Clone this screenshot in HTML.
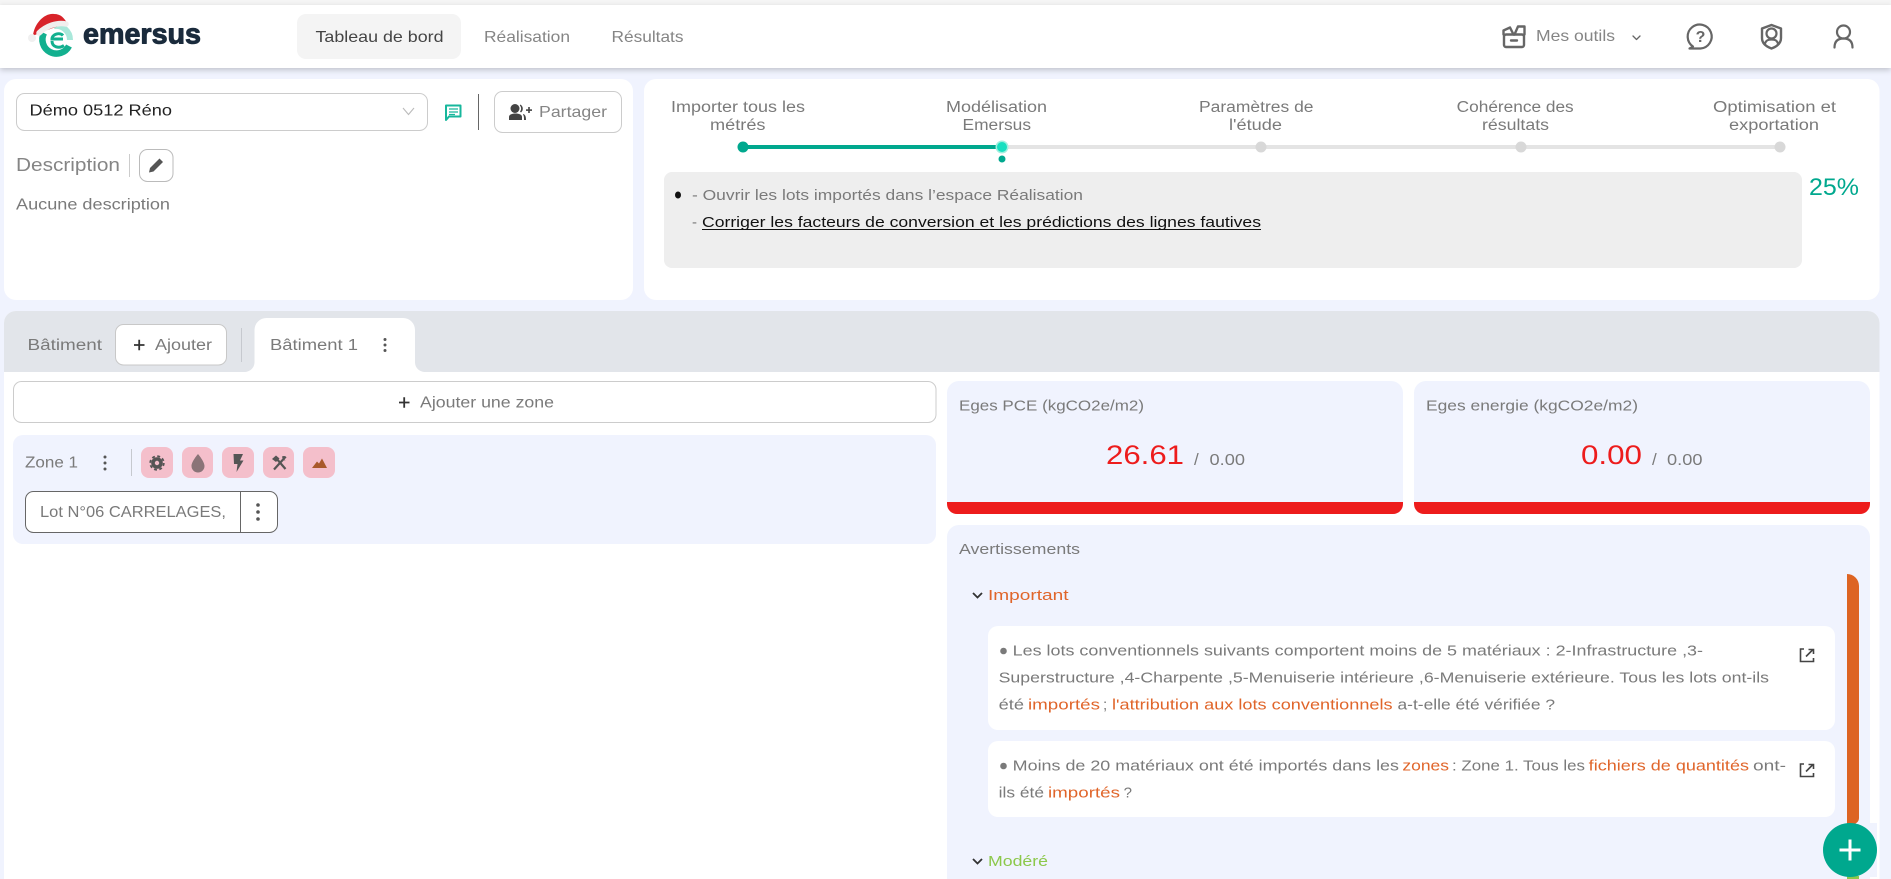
<!DOCTYPE html>
<html lang="fr">
<head>
<meta charset="utf-8">
<title>Emersus</title>
<style>
html,body{margin:0;padding:0;width:1891px;height:879px;overflow:hidden;background:#f0f3fe}
svg{display:block}
text{font-family:"Liberation Sans",Arial,sans-serif;font-size:15px;fill:#7a7a7a;white-space:pre}
</style>
</head>
<body>
<svg width="1891" height="879" viewBox="0 0 1891 879" xmlns="http://www.w3.org/2000/svg">
<rect width="1891" height="879" fill="#f0f3fe"/>
<!-- header -->
<rect y="0" width="1891" height="5" fill="#f5f5f5"/>
<rect y="5" width="1891" height="63" fill="#fff" style="filter:drop-shadow(0 2px 3px rgba(0,0,0,.2))"/>
<!-- logo -->
<path d="M44 33A14 14 0 1 0 69 46" fill="none" stroke="#12b08f" stroke-width="6.5"/>
<path d="M54 26A14 14 0 0 1 70 40" fill="none" stroke="#a9e8da" stroke-width="6"/>
<path d="M63 39H52C52 34 60 32 63 35.500M52 41C52 47 59 49 64 45.500" fill="none" stroke="#12b08f" stroke-width="3"/>
<path d="M33 36C34 24 44 13 54 14C61 14 64 18 67 23L39 33Z" fill="#d8232a"/>
<path d="M39 33C46 26 57 22 66 24" fill="none" stroke="#f1efee" stroke-width="5.500" stroke-linecap="round"/>
<circle cx="32" cy="38" r="4" fill="#f0f0f0"/>
<text x="83" y="43.500" textLength="118" lengthAdjust="spacingAndGlyphs" style="font-size:29px;font-weight:700;fill:#1a2b3c;stroke:#1a2b3c;stroke-width:1;stroke-linejoin:round">emersus</text>
<!-- nav -->
<rect x="297" y="14" width="164" height="45" rx="9" fill="#f4f4f4"/>
<text x="315.500" y="42" textLength="128" lengthAdjust="spacingAndGlyphs" style="font-size:16px;fill:#444">Tableau de bord</text>
<text x="484" y="42" textLength="86" lengthAdjust="spacingAndGlyphs" style="font-size:16px;fill:#858585">Réalisation</text>
<text x="611.500" y="42" textLength="72" lengthAdjust="spacingAndGlyphs" style="font-size:16px;fill:#858585">Résultats</text>
<!-- right tools -->
<g fill="none" stroke="#666" stroke-width="2.400" stroke-linejoin="round" stroke-linecap="round">
<rect x="1504" y="34.500" width="20" height="12.500" rx="2"/>
<path d="M1503.500 34.500V30.500L1510 27.500L1513.500 34.500M1514.500 34.500L1518 26.500H1524.500V34.500M1511 40.500H1517"/>
<path d="M1633 36L1636.500 39.500L1640 36" stroke-width="1.300"/>
<path d="M1693 46.500A12 12 0 1 1 1700.500 48.500C1698 48.500 1695 48.500 1689.500 48.500C1691.500 47.500 1692.500 47 1693 46.500Z" stroke-width="2.200"/>
<path d="M1771.500 25L1781 28.500V38C1781 43 1777 46.500 1771.500 48.500C1766 46.500 1762 43 1762 38V28.500Z"/>
<circle cx="1771.500" cy="33.500" r="5" stroke-width="2.200"/>
<path d="M1765 43.500C1766 40 1768.500 39.500 1771.500 39.500C1774.500 39.500 1777 40 1778 43.500" stroke-width="2.200"/>
<circle cx="1843.500" cy="32" r="6.500" stroke-width="2.200"/>
<path d="M1834.500 47.500C1834.500 41 1838 38.500 1843.500 38.500C1849 38.500 1852.500 41 1852.500 47.500" stroke-width="2.200"/>
</g>
<text x="1700.500" y="42" text-anchor="middle" style="font-size:16px;font-weight:700;fill:#666">?</text>
<text x="1536" y="41" textLength="79" lengthAdjust="spacingAndGlyphs" style="font-size:16px;fill:#858585">Mes outils</text>

<!-- left card -->
<rect x="4" y="79" width="629" height="221" rx="12" fill="#fff"/>
<rect x="16.500" y="93.500" width="411" height="37" rx="8" fill="#fff" stroke="#ccc"/>
<text x="29.500" y="115.500" textLength="142.500" lengthAdjust="spacingAndGlyphs" style="font-size:16px;fill:#222">Démo 0512 Réno</text>
<path d="M403 108L408.500 114.500L414 108" fill="none" stroke="#bbb" stroke-width="1.100"/>
<path d="M446 105.500H460.500V116.500H449L446 120Z" fill="none" stroke="#17b79c" stroke-width="2" stroke-linejoin="round"/>
<path d="M449 109H458M449 112H458M449 114.500H455" stroke="#17b79c" stroke-width="1.300"/>
<rect x="478" y="94" width="1" height="36" fill="#666"/>
<rect x="494.500" y="91.500" width="127" height="41" rx="8" fill="#fff" stroke="#ccc"/>
<g fill="#444">
<circle cx="515" cy="108.500" r="4.500"/>
<path d="M509 120V117C509 114.500 512 113.500 515.500 113.500C519 113.500 522 114.500 522 117V120Z"/>
<path d="M520.500 104.500C523.500 106.500 523.500 110.500 521 112.500L520 111.500C521.500 110 521.500 107 519.800 105.500Z"/>
<path d="M523.500 114C525.500 115 526 117 526 120H524C524 117.500 524 116 523 114.500Z"/>
<rect x="526" y="109.300" width="6" height="1.600"/><rect x="528.200" y="107" width="1.600" height="6"/>
</g>
<text x="539" y="117" textLength="68" lengthAdjust="spacingAndGlyphs" style="font-size:16px;fill:#858585">Partager</text>
<text x="16" y="171" textLength="104" lengthAdjust="spacingAndGlyphs" style="font-size:18px;fill:#858585">Description</text>
<rect x="129" y="154" width="1" height="23" fill="#ccc"/>
<rect x="139.500" y="149.500" width="33.500" height="32" rx="8" fill="#fff" stroke="#bbb"/>
<path d="M149 172.500L150 168L159.500 158.500L163 162L153.500 171.500Z" fill="#555"/>
<text x="16" y="209.500" textLength="154" lengthAdjust="spacingAndGlyphs" style="font-size:15.500px">Aucune description</text>

<!-- right card -->
<rect x="644" y="79" width="1235.500" height="221" rx="12" fill="#fff"/>
<text x="671" y="112" textLength="134" lengthAdjust="spacingAndGlyphs" style="font-size:15.500px">Importer tous les</text>
<text x="710" y="130" textLength="55.500" lengthAdjust="spacingAndGlyphs" style="font-size:15.500px">métrés</text>
<text x="946" y="112" textLength="101" lengthAdjust="spacingAndGlyphs" style="font-size:15.500px">Modélisation</text>
<text x="962.500" y="130" textLength="68.500" lengthAdjust="spacingAndGlyphs" style="font-size:15.500px">Emersus</text>
<text x="1199" y="112" textLength="114.500" lengthAdjust="spacingAndGlyphs" style="font-size:15.500px">Paramètres de</text>
<text x="1229" y="130" textLength="53" lengthAdjust="spacingAndGlyphs" style="font-size:15.500px">l'étude</text>
<text x="1456.700" y="112" textLength="117" lengthAdjust="spacingAndGlyphs" style="font-size:15.500px">Cohérence des</text>
<text x="1482" y="130" textLength="67" lengthAdjust="spacingAndGlyphs" style="font-size:15.500px">résultats</text>
<text x="1713" y="112" textLength="123" lengthAdjust="spacingAndGlyphs" style="font-size:15.500px">Optimisation et</text>
<text x="1729" y="130" textLength="90" lengthAdjust="spacingAndGlyphs" style="font-size:15.500px">exportation</text>
<rect x="1002" y="145" width="778" height="4" fill="#e4e4e4"/>
<rect x="742" y="145" width="260" height="4" fill="#00a88e"/>
<circle cx="743" cy="147" r="5.500" fill="#00a88e"/>
<circle cx="1002" cy="147" r="6.500" fill="#9ff0df"/>
<circle cx="1002" cy="147" r="5" fill="#17dfc0"/>
<circle cx="1002" cy="159" r="3.500" fill="#00a88e"/>
<circle cx="1261" cy="147" r="5.500" fill="#d8d8d8"/>
<circle cx="1521" cy="147" r="5.500" fill="#d8d8d8"/>
<circle cx="1780" cy="147" r="5.500" fill="#d8d8d8"/>
<rect x="664" y="172" width="1138" height="96" rx="8" fill="#eee"/>
<ellipse cx="678" cy="195" rx="3" ry="3.500" fill="#111"/>
<text x="692" y="200" textLength="391" lengthAdjust="spacingAndGlyphs">- Ouvrir les lots importés dans l’espace Réalisation</text>
<text x="692" y="227">-</text>
<text x="702" y="227" textLength="559" lengthAdjust="spacingAndGlyphs" style="fill:#111">Corriger les facteurs de conversion et les prédictions des lignes fautives</text>
<rect x="702" y="229" width="559" height="1" fill="#111"/>
<text x="1809" y="195" textLength="50" lengthAdjust="spacingAndGlyphs" style="font-size:24px;fill:#00a88e;font-weight:400">25%</text>

<!-- building section -->
<path d="M4 879V323A12 12 0 0 1 16 311H1867.500A12 12 0 0 1 1879.500 323V879Z" fill="#fff"/>
<path d="M4 372V323A12 12 0 0 1 16 311H1867.500A12 12 0 0 1 1879.500 323V372Z" fill="#e2e5ea"/>
<path d="M244 372C250 372 254.500 368 254.500 362V330A12 12 0 0 1 266.500 318H403A12 12 0 0 1 415 330V362C415 368 419.500 372 425.500 372Z" fill="#fff"/>
<text x="27.500" y="350" textLength="74.500" lengthAdjust="spacingAndGlyphs" style="font-size:15.500px">Bâtiment</text>
<rect x="115.500" y="324.500" width="111" height="40.500" rx="8" fill="#fff" stroke="#c8c8c8"/>
<path d="M134 345H144.500M139.200 339.700V350.300" stroke="#333" stroke-width="1.800"/>
<text x="155" y="350" textLength="57" lengthAdjust="spacingAndGlyphs" style="font-size:15.500px">Ajouter</text>
<rect x="241" y="328" width="1" height="34" fill="#c6c9cf"/>
<text x="270" y="350" textLength="88" lengthAdjust="spacingAndGlyphs" style="font-size:15.500px">Bâtiment 1</text>
<g fill="#555"><circle cx="385" cy="339.500" r="1.500"/><circle cx="385" cy="345" r="1.500"/><circle cx="385" cy="350.500" r="1.500"/></g>

<rect x="13.500" y="381.500" width="922.500" height="41" rx="8" fill="#fff" stroke="#ccc"/>
<path d="M399 402.500H409.500M404.200 397.200V407.800" stroke="#333" stroke-width="1.800"/>
<text x="420" y="407.500" textLength="134" lengthAdjust="spacingAndGlyphs" style="font-size:15.500px">Ajouter une zone</text>

<rect x="13" y="435" width="923" height="109" rx="10" fill="#f0f3fe"/>
<text x="25" y="467.500" textLength="53" lengthAdjust="spacingAndGlyphs" style="font-size:15.500px">Zone 1</text>
<g fill="#555"><circle cx="105" cy="457" r="1.500"/><circle cx="105" cy="463" r="1.500"/><circle cx="105" cy="469" r="1.500"/></g>
<rect x="131" y="449" width="1" height="27" fill="#c6c9cf"/>
<g fill="#f4bfcb">
<rect x="141" y="447" width="32" height="31" rx="8"/>
<rect x="182" y="447" width="31" height="31" rx="8"/>
<rect x="222" y="447" width="32" height="31" rx="8"/>
<rect x="263" y="447" width="31" height="31" rx="8"/>
<rect x="303" y="447" width="32" height="31" rx="8"/>
</g>
<circle cx="157" cy="463" r="4" fill="none" stroke="#555" stroke-width="3.600"/>
<circle cx="157" cy="463" r="6.800" fill="none" stroke="#555" stroke-width="1.800" stroke-dasharray="2.900 2.450"/>
<path d="M198 454C198 454 191.500 461.500 191.500 466A6.500 6.500 0 0 0 204.500 466C204.500 461.500 198 454 198 454Z" fill="#8a7478"/>
<path d="M233.500 454H243L240 460.500H243.500L236.500 472L237.500 464H234Z" fill="#555"/>
<path d="M274 469.500L284 458.500M276 458L285.500 469" stroke="#555" stroke-width="2.200" fill="none"/>
<path d="M272 459L276 455.500L279.500 458.500L276 462Z" fill="#555"/>
<path d="M282 456.500C284 455.500 286 456 286.500 457.500L284.500 459.500L285.500 460.500L283 460Z" fill="#555"/>
<path d="M312 468L317 461.500L319 463.500L322 458.500L327 468Z" fill="#a9592b"/>

<rect x="25.500" y="491.500" width="252" height="41" rx="8" fill="#fff" stroke="#666"/>
<rect x="240" y="491.500" width="1" height="41" fill="#666"/>
<text x="40" y="517" textLength="186" lengthAdjust="spacingAndGlyphs" style="font-size:15.500px">Lot N°06 CARRELAGES,</text>
<g fill="#555"><circle cx="258" cy="505" r="1.800"/><circle cx="258" cy="512" r="1.800"/><circle cx="258" cy="519" r="1.800"/></g>

<!-- KPI cards -->
<rect x="947" y="381" width="456" height="133" rx="12" fill="#f0f3fe"/>
<path d="M947 502H1403V504A10 10 0 0 1 1393 514H957A10 10 0 0 1 947 504Z" fill="#ed1c1c"/>
<rect x="1414" y="381" width="456" height="133" rx="12" fill="#f0f3fe"/>
<path d="M1414 502H1870V504A10 10 0 0 1 1860 514H1424A10 10 0 0 1 1414 504Z" fill="#ed1c1c"/>
<text x="959" y="410.500" textLength="185" lengthAdjust="spacingAndGlyphs">Eges PCE (kgCO2e/m2)</text>
<text x="1426" y="410.500" textLength="212" lengthAdjust="spacingAndGlyphs">Eges energie (kgCO2e/m2)</text>
<text x="1106" y="464" textLength="78" lengthAdjust="spacingAndGlyphs" style="font-size:27px;fill:#ed1c1c">26.61</text>
<text x="1194" y="465" style="font-size:17px">/</text>
<text x="1209.500" y="465" textLength="35.500" lengthAdjust="spacingAndGlyphs" style="font-size:16px">0.00</text>
<text x="1581" y="464" textLength="61" lengthAdjust="spacingAndGlyphs" style="font-size:27px;fill:#ed1c1c">0.00</text>
<text x="1652" y="465" style="font-size:17px">/</text>
<text x="1667" y="465" textLength="35.500" lengthAdjust="spacingAndGlyphs" style="font-size:16px">0.00</text>

<!-- warnings -->
<path d="M947 879V537A12 12 0 0 1 959 525H1858A12 12 0 0 1 1870 537V879Z" fill="#f0f3fe"/>
<text x="959" y="554" textLength="121" lengthAdjust="spacingAndGlyphs">Avertissements</text>
<path d="M973 593L977.500 597.500L982 593" fill="none" stroke="#333" stroke-width="1.800"/>
<text x="988" y="600" textLength="80.500" lengthAdjust="spacingAndGlyphs" style="fill:#e0652a">Important</text>
<path d="M1847 824V574A12 12 0 0 1 1859 586V818A6 6 0 0 1 1853 824Z" fill="#dd6423"/>

<rect x="988" y="626" width="847" height="104" rx="10" fill="#fff"/>
<circle cx="1003.500" cy="651" r="3.300" fill="#7a7a7a"/>
<text x="1012.700" y="655.500" textLength="690.300" lengthAdjust="spacingAndGlyphs">Les lots conventionnels suivants comportent moins de 5 matériaux : 2-Infrastructure ,3-</text>
<text x="998.600" y="682.500" textLength="770.400" lengthAdjust="spacingAndGlyphs">Superstructure ,4-Charpente ,5-Menuiserie intérieure ,6-Menuiserie extérieure. Tous les lots ont-ils</text>
<text x="998.600" y="709.500" textLength="25.400" lengthAdjust="spacingAndGlyphs">été</text>
<text x="1028" y="709.500" textLength="72" lengthAdjust="spacingAndGlyphs" style="fill:#e0652a">importés</text>
<text x="1103" y="709.500">;</text>
<text x="1112" y="709.500" textLength="280.600" lengthAdjust="spacingAndGlyphs" style="fill:#e0652a">l'attribution aux lots conventionnels</text>
<text x="1397.500" y="709.500" textLength="157.500" lengthAdjust="spacingAndGlyphs">a-t-elle été vérifiée ?</text>
<path d="M1804 649H1800.500V661.500H1813.500V658M1806 656.500L1813 649.500M1808.500 649.500H1813.500V654" fill="none" stroke="#444" stroke-width="1.600"/>

<rect x="988" y="741" width="847" height="76" rx="10" fill="#fff"/>
<circle cx="1003.500" cy="766" r="3.300" fill="#7a7a7a"/>
<text x="1012.700" y="770.500" textLength="386.300" lengthAdjust="spacingAndGlyphs">Moins de 20 matériaux ont été importés dans les</text>
<text x="1402.400" y="770.500" textLength="46.600" lengthAdjust="spacingAndGlyphs" style="fill:#e0652a">zones</text>
<text x="1452" y="770.500" textLength="133" lengthAdjust="spacingAndGlyphs">: Zone 1. Tous les</text>
<text x="1588.700" y="770.500" textLength="160.300" lengthAdjust="spacingAndGlyphs" style="fill:#e0652a">fichiers de quantités</text>
<text x="1753" y="770.500" textLength="33" lengthAdjust="spacingAndGlyphs">ont-</text>
<text x="998.600" y="797.500" textLength="45.400" lengthAdjust="spacingAndGlyphs">ils été</text>
<text x="1048" y="797.500" textLength="72" lengthAdjust="spacingAndGlyphs" style="fill:#e0652a">importés</text>
<text x="1123.600" y="797.500">?</text>
<path d="M1804 764H1800.500V776.500H1813.500V773M1806 771.500L1813 764.500M1808.500 764.500H1813.500V769" fill="none" stroke="#444" stroke-width="1.600"/>

<path d="M973 859L977.500 863.500L982 859" fill="none" stroke="#333" stroke-width="1.800"/>
<text x="988" y="866" textLength="60" lengthAdjust="spacingAndGlyphs" style="fill:#8cc84b">Modéré</text>
<rect x="1847" y="876" width="12" height="3" fill="#8cc84b"/>

<!-- FAB -->
<rect x="1870" y="823" width="7" height="54" fill="#f0f3fe"/>
<circle cx="1850" cy="850" r="27" fill="#00a88e"/>
<path d="M1839.500 850H1860.500M1850 839.500V860.500" stroke="#fff" stroke-width="3"/>
</svg>
</body>
</html>
